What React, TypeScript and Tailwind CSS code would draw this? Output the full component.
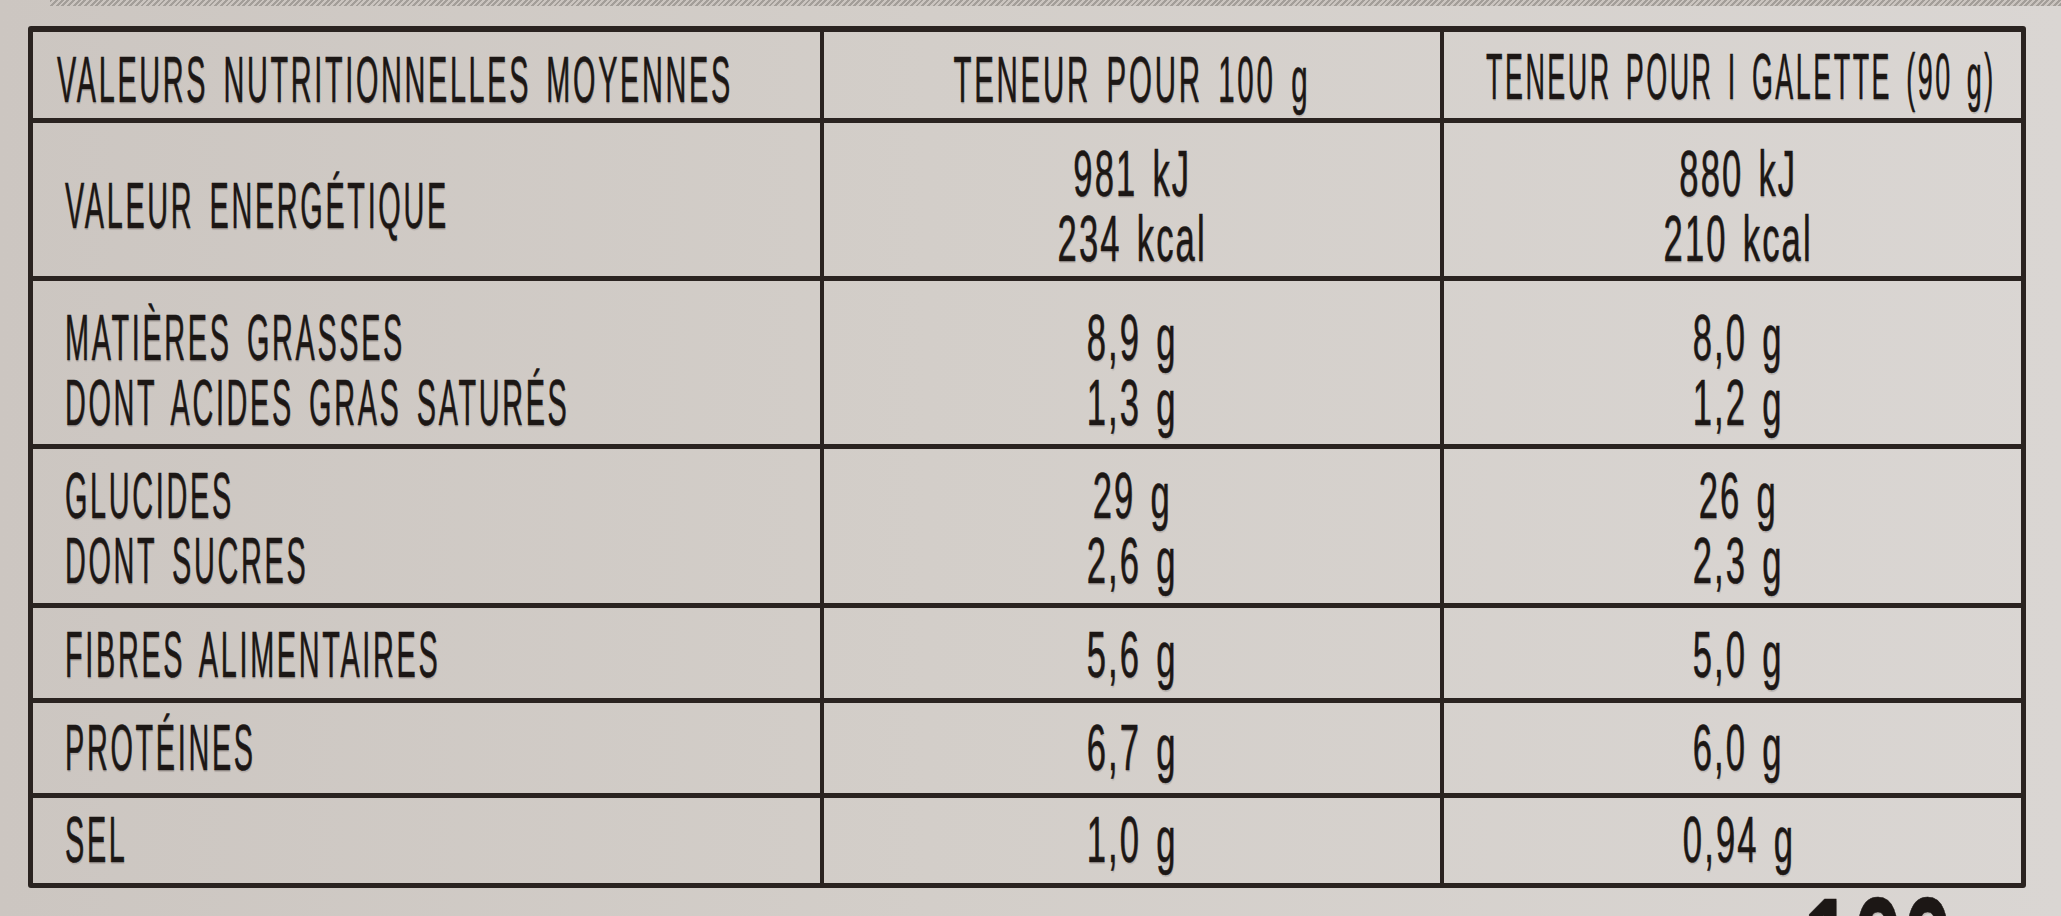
const font = { fontFamily: '"Liberation Sans", Arial, sans-serif' };

type Row = {
  h: string;
  pad: string;
  label: string[];
  a: string[];
  b: string[];
};

const rows: Row[] = [
  { h: "h-[158px]", pad: "pt-[14px]", label: ["VALEUR ENERGÉTIQUE"], a: ["981 kJ", "234 kcal"], b: ["880 kJ", "210 kcal"] },
  { h: "h-[168px]", pad: "pt-4", label: ["MATIÈRES GRASSES", "DONT ACIDES GRAS SATURÉS"], a: ["8,9 g", "1,3 g"], b: ["8,0 g", "1,2 g"] },
  { h: "h-[159px]", pad: "pt-[6px]", label: ["GLUCIDES", "DONT SUCRES"], a: ["29 g", "2,6 g"], b: ["26 g", "2,3 g"] },
  { h: "h-[95px]", pad: "pt-1", label: ["FIBRES ALIMENTAIRES"], a: ["5,6 g"], b: ["5,0 g"] },
  { h: "h-[95px]", pad: "pt-0", label: ["PROTÉINES"], a: ["6,7 g"], b: ["6,0 g"] },
  { h: "h-[90px]", pad: "pt-0", label: ["SEL"], a: ["1,0 g"], b: ["0,94 g"] },
];

function Label({ lines }: { lines: string[] }) {
  return (
    <>
      {lines.map((t) => (
        <span key={t} className="block origin-left scale-x-[0.45] whitespace-nowrap tracking-[6px] [word-spacing:10px]">
          {t}
        </span>
      ))}
    </>
  );
}

function Value({ lines }: { lines: string[] }) {
  return (
    <>
      {lines.map((t) => (
        <span key={t} className="inline-block origin-center scale-x-[0.54] whitespace-nowrap tracking-[4px] [word-spacing:6px]">
          {t}
        </span>
      ))}
    </>
  );
}

export default function App() {
  return (
    <div
      style={font}
      className="relative h-[916px] w-[2061px] overflow-hidden bg-[linear-gradient(90deg,#ccc6c1,#d3cec9_45%,#dad6d3)] text-[64px] leading-[65px] text-[#1c1715] [-webkit-text-stroke:0.6px_#1c1715] [text-shadow:1px_2px_1px_rgba(40,30,25,0.15)]"
    >
      {/* hatched strip at the very top of the pack */}
      <div className="ml-[50px] h-[6px] bg-[repeating-linear-gradient(135deg,#a39e99_0px,#a39e99_2px,#cbc5c0_2px,#cbc5c0_4px)]" />

      <div className="ml-[28px] mt-[20px] flex w-[1998px] flex-col rounded-[3px] border-[5px] border-t-[6px] border-[#2a2320]">
        {/* header */}
        <div className="grid h-[86px] grid-cols-[787px_620px_581px]">
          <div className="flex flex-col justify-center pl-6 pt-[11px]">
            <Label lines={["VALEURS NUTRITIONNELLES MOYENNES"]} />
          </div>
          <div className="flex flex-col items-center justify-center border-l-4 border-[#2a2320] pt-[11px]">
            <span className="inline-block origin-center scale-x-[0.46] whitespace-nowrap tracking-[6px] [word-spacing:10px]">
              TENEUR POUR 100 g
            </span>
          </div>
          <div className="flex flex-col items-center justify-center border-l-4 border-[#2a2320] pl-4 pt-[4px]">
            <span className="inline-block origin-center scale-x-[0.42] whitespace-nowrap tracking-[6px] [word-spacing:10px]">
              TENEUR POUR I GALETTE (90 g)
            </span>
          </div>
        </div>

        {rows.map((r) => (
          <div key={r.label[0]} className={`grid grid-cols-[787px_620px_581px] border-t-[5px] border-[#2a2320] ${r.h}`}>
            <div className={`flex flex-col justify-center pl-8 ${r.pad}`}>
              <Label lines={r.label} />
            </div>
            <div className={`flex flex-col items-center justify-center border-l-4 border-[#2a2320] ${r.pad}`}>
              <Value lines={r.a} />
            </div>
            <div className={`flex flex-col items-center justify-center border-l-4 border-[#2a2320] pl-3 ${r.pad}`}>
              <Value lines={r.b} />
            </div>
          </div>
        ))}
      </div>

      {/* large figure printed below the table, cut by the photo edge */}
      <div className="-mt-[11px] flex justify-end pr-[108px]">
        <span className="inline-block origin-right scale-x-[0.64] whitespace-nowrap text-[140px] font-bold leading-none">
          100
        </span>
      </div>
    </div>
  );
}
